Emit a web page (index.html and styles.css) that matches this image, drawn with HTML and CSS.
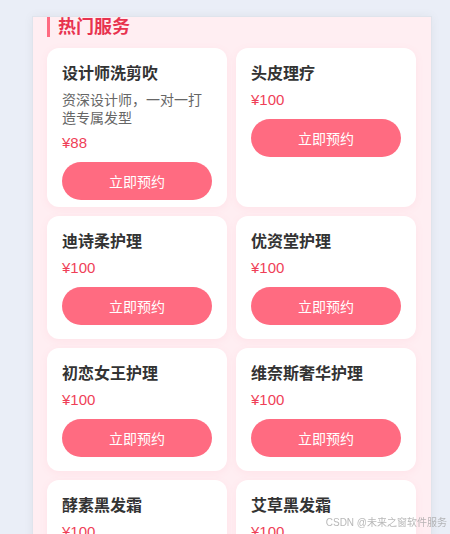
FILE: index.html
```html
<!DOCTYPE html>
<html lang="zh-CN">
<head>
    <meta charset="UTF-8">
    <meta name="viewport" content="width=device-width, initial-scale=1.0">
    <title>热门服务</title>
    <link rel="stylesheet" href="styles.css">
</head>
<body>
    <div class="panel">
        <h2 class="section-title">热门服务</h2>
        <div class="service-grid">
            <div class="card card-desc">
                <h3>设计师洗剪吹</h3>
                <p class="desc">资深设计师，一对一打造专属发型</p>
                <div class="price">¥88</div>
                <button type="button">立即预约</button>
            </div>
            <div class="card">
                <h3>头皮理疗</h3>
                <div class="price">¥100</div>
                <button type="button">立即预约</button>
            </div>
            <div class="card">
                <h3>迪诗柔护理</h3>
                <div class="price">¥100</div>
                <button type="button">立即预约</button>
            </div>
            <div class="card">
                <h3>优资堂护理</h3>
                <div class="price">¥100</div>
                <button type="button">立即预约</button>
            </div>
            <div class="card">
                <h3>初恋女王护理</h3>
                <div class="price">¥100</div>
                <button type="button">立即预约</button>
            </div>
            <div class="card">
                <h3>维奈斯奢华护理</h3>
                <div class="price">¥100</div>
                <button type="button">立即预约</button>
            </div>
            <div class="card">
                <h3>酵素黑发霜</h3>
                <div class="price">¥100</div>
                <button type="button">立即预约</button>
            </div>
            <div class="card">
                <h3>艾草黑发霜</h3>
                <div class="price">¥100</div>
                <button type="button">立即预约</button>
            </div>
        </div>
    </div>
    <div class="watermark">CSDN @未来之窗软件服务</div>
</body>
</html>
```

FILE: styles.css
```css
html, body {
    overflow: hidden;
}
body {
    margin: 0;
    height: 534px;
    background-color: #eaeef7;
    font-family: "Liberation Sans", Arial, "Noto Sans CJK SC", sans-serif;
}
.panel {
    box-sizing: border-box;
    width: 400px;
    margin: 16px 0 0 32px;
    padding: 0 15px 20px 14px;
    background-color: #ffeef2;
    border: 1px solid #dfe4ec;
    box-shadow: 0 0 10px rgba(0, 0, 0, 0.05);
}
.section-title {
    margin: 0 0 11px;
    padding-left: 8px;
    border-left: 3px solid #ff6b81;
    font-size: 18px;
    line-height: 20px;
    color: #e8334f;
}
.service-grid {
    display: grid;
    grid-template-columns: 180px 180px;
    gap: 9px;
}
.card {
    box-sizing: border-box;
    padding: 15px 15px 14px;
    background-color: white;
    border-radius: 12px;
    box-shadow: 0 2px 8px rgba(255, 107, 129, 0.08);
}
.card-desc {
    padding-bottom: 7px;
}
.card h3 {
    margin: 0 0 5px;
    font-size: 16px;
    line-height: 22px;
    color: #333;
}
.desc {
    margin: 6px 0 6px;
    font-size: 14px;
    line-height: 18px;
    color: #666;
}
.price {
    margin-bottom: 9px;
    font-size: 15px;
    line-height: 20px;
    color: #ef3f58;
}
button {
    display: block;
    width: 100%;
    height: 38px;
    border: none;
    border-radius: 19px;
    background-color: #ff6b81;
    color: white;
    font-family: inherit;
    font-size: 14px;
    cursor: pointer;
}
.watermark {
    position: fixed;
    right: 3px;
    bottom: 5px;
    font-size: 10px;
    color: rgba(160, 160, 160, 0.75);
}
```
